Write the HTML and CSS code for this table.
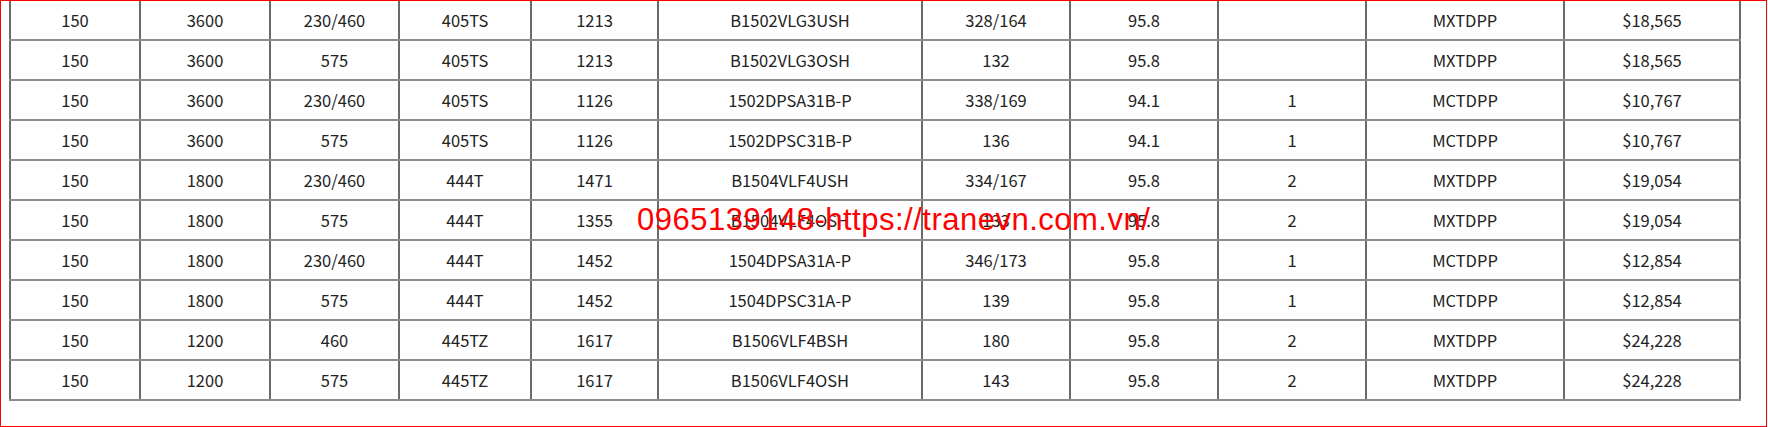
FILE: index.html
```html
<!DOCTYPE html>
<html>
<head>
<meta charset="utf-8">
<link rel="stylesheet" href="styles.css">
</head>
<body>
<div class="frame">
  <table class="grid">
    <colgroup>
      <col class="c1"><col class="c2"><col class="c3"><col class="c4"><col class="c5"><col class="c6"><col class="c7"><col class="c8"><col class="c9"><col class="c10"><col class="c11">
    </colgroup>
    <tbody>
      <tr><td>150</td><td>3600</td><td>230/460</td><td>405TS</td><td>1213</td><td>B1502VLG3USH</td><td>328/164</td><td>95.8</td><td></td><td>MXTDPP</td><td>$18,565</td></tr>
      <tr><td>150</td><td>3600</td><td>575</td><td>405TS</td><td>1213</td><td>B1502VLG3OSH</td><td>132</td><td>95.8</td><td></td><td>MXTDPP</td><td>$18,565</td></tr>
      <tr><td>150</td><td>3600</td><td>230/460</td><td>405TS</td><td>1126</td><td>1502DPSA31B-P</td><td>338/169</td><td>94.1</td><td>1</td><td>MCTDPP</td><td>$10,767</td></tr>
      <tr><td>150</td><td>3600</td><td>575</td><td>405TS</td><td>1126</td><td>1502DPSC31B-P</td><td>136</td><td>94.1</td><td>1</td><td>MCTDPP</td><td>$10,767</td></tr>
      <tr><td>150</td><td>1800</td><td>230/460</td><td>444T</td><td>1471</td><td>B1504VLF4USH</td><td>334/167</td><td>95.8</td><td>2</td><td>MXTDPP</td><td>$19,054</td></tr>
      <tr><td>150</td><td>1800</td><td>575</td><td>444T</td><td>1355</td><td>B1504VLF4OSH</td><td>133</td><td>95.8</td><td>2</td><td>MXTDPP</td><td>$19,054</td></tr>
      <tr><td>150</td><td>1800</td><td>230/460</td><td>444T</td><td>1452</td><td>1504DPSA31A-P</td><td>346/173</td><td>95.8</td><td>1</td><td>MCTDPP</td><td>$12,854</td></tr>
      <tr><td>150</td><td>1800</td><td>575</td><td>444T</td><td>1452</td><td>1504DPSC31A-P</td><td>139</td><td>95.8</td><td>1</td><td>MCTDPP</td><td>$12,854</td></tr>
      <tr><td>150</td><td>1200</td><td>460</td><td>445TZ</td><td>1617</td><td>B1506VLF4BSH</td><td>180</td><td>95.8</td><td>2</td><td>MXTDPP</td><td>$24,228</td></tr>
      <tr><td>150</td><td>1200</td><td>575</td><td>445TZ</td><td>1617</td><td>B1506VLF4OSH</td><td>143</td><td>95.8</td><td>2</td><td>MXTDPP</td><td>$24,228</td></tr>
    </tbody>
  </table>
  <div class="watermark">0965139148-https://tranevn.com.vn/</div>
</div>
</body>
</html>
```
FILE: styles.css
```css
html, body {
  margin: 0;
  padding: 0;
  background: #ffffff;
}
.frame {
  position: relative;
  box-sizing: border-box;
  width: 1767px;
  height: 427px;
  border: 1px solid #ff0000;
  overflow: hidden;
  padding: 0 0 0 8px;
}
.grid {
  margin-top: -2px;
  border-collapse: collapse;
  table-layout: fixed;
  width: 1730px;
  font-family: "Noto Sans CJK SC", "Noto Sans", sans-serif;
  font-size: 16.5px;
  color: #222222;
}
.grid td {
  height: 38px;
  padding: 0;
  text-align: center;
  vertical-align: middle;
  border-top: 2px solid #8c8c8c;
  border-bottom: 2px solid #8c8c8c;
  border-left: 2px solid #6a6a6a;
  border-right: 2px solid #6a6a6a;
  line-height: 20px;
}
.c1 { width: 130px; }
.c2 { width: 130px; }
.c3 { width: 129px; }
.c4 { width: 132px; }
.c5 { width: 127px; }
.c6 { width: 264px; }
.c7 { width: 148px; }
.c8 { width: 148px; }
.c9 { width: 148px; }
.c10 { width: 198px; }
.c11 { width: 176px; }
.watermark {
  position: absolute;
  left: 636px;
  top: 201px;
  font-family: "Liberation Sans", Arial, sans-serif;
  font-size: 31px;
  line-height: normal;
  letter-spacing: 0.5px;
  color: #ff0000;
  white-space: nowrap;
}
```
